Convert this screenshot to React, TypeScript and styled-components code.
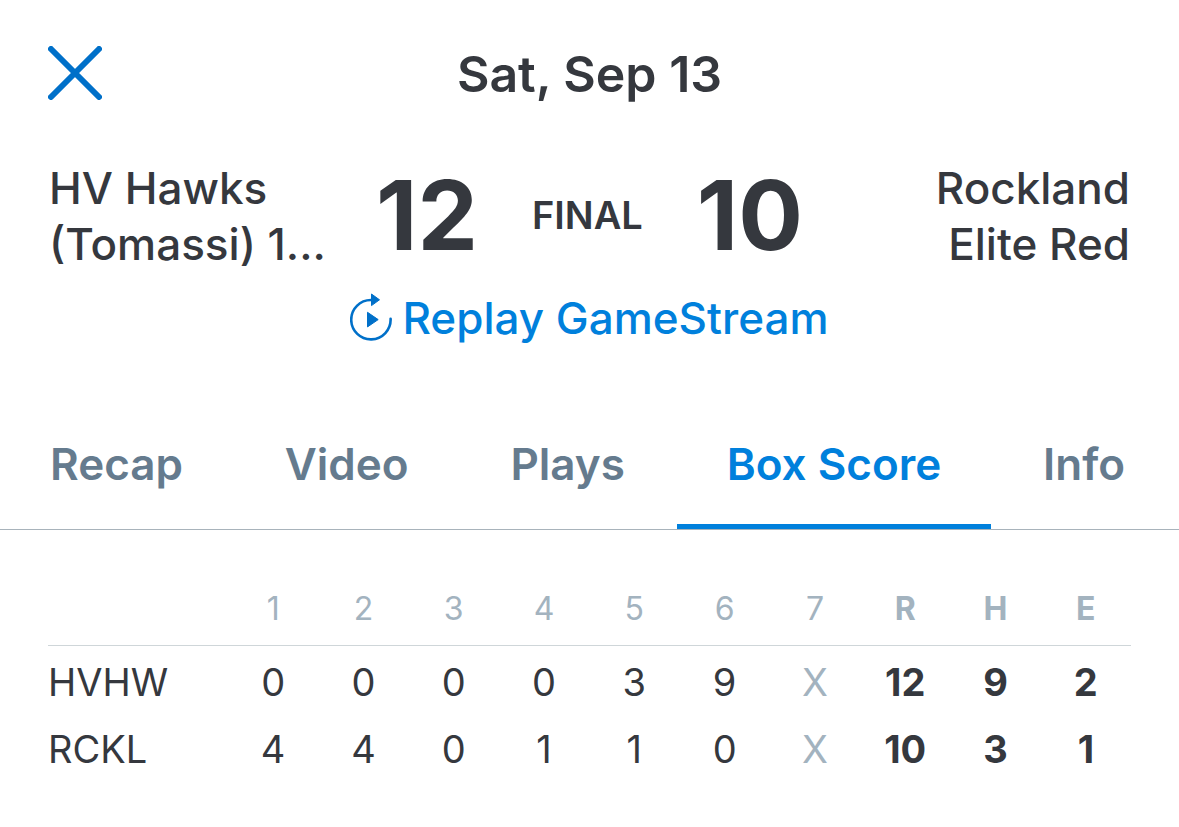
import React from "react";
import styled, { createGlobalStyle } from "styled-components";

const GlobalStyle = createGlobalStyle`
  *, *::before, *::after { box-sizing: border-box; }
  body {
    margin: 0;
    background: #fff;
    color: #35383e;
    font-family: Inter, "Liberation Sans", sans-serif;
  }
  button, h1, h2, p { margin: 0; padding: 0; font: inherit; }
  button { border: 0; background: none; cursor: pointer; }
`;

const Header = styled.header`
  display: grid;
  grid-template-columns: 56px 1fr 56px;
  align-items: center;
  padding: 40px 48px 0;
`;

const CloseButton = styled.button`
  display: flex;
  padding-bottom: 2px;
  color: #0070c9;
`;

const Title = styled.h1`
  && {
    text-align: center;
    font-size: 50px;
    line-height: 68px;
    font-weight: 600;
  }
`;

const Scoreboard = styled.section`
  display: grid;
  grid-template-columns: 1fr auto 1fr;
  align-items: center;
  padding: 52px 49px 0;
`;

const Team = styled.h2<{ $away?: boolean }>`
  && {
    font-size: 44px;
    line-height: 56px;
    font-weight: 500;
    white-space: pre-line;
    text-align: ${(p) => (p.$away ? "right" : "left")};
  }
`;

const Result = styled.div`
  display: flex;
  align-items: center;
  gap: 54px;
`;

const Score = styled.strong`
  padding-bottom: 2px;
  font-size: 96px;
  line-height: 110px;
  font-weight: 700;
`;

const Status = styled.span`
  padding-bottom: 2px;
  font-size: 38px;
  line-height: 56px;
  font-weight: 600;
`;

const ReplayButton = styled.button`
  display: flex;
  align-items: center;
  gap: 10px;
  color: #0080dc;
  && {
    margin: 16px auto 0;
    font-size: 44px;
    line-height: 60px;
    font-weight: 500;
  }
`;

const ReplaySymbol = styled.svg`
  color: #0070c9;
`;

const Tabs = styled.nav`
  display: flex;
  justify-content: space-between;
  margin-top: 64px;
  padding-right: 4px;
  border-bottom: 1px solid #a8b3bb;
`;

const Tab = styled.button<{ $active?: boolean }>`
  height: 117px;
  color: ${(p) => (p.$active ? "#0080dc" : "#657b8e")};
  border-bottom: 5px solid ${(p) => (p.$active ? "#0080dc" : "transparent")};
  && {
    padding: 0 50px 8px;
    font-size: 44px;
    line-height: 56px;
    font-weight: 600;
    white-space: nowrap;
  }
`;

const BoxScore = styled.section`
  padding: 40px 48px 44px;
`;

const Table = styled.table`
  width: 100%;
  table-layout: fixed;
  border-collapse: collapse;
  font-size: 38px;
  text-align: center;
`;

const TeamColumn = styled.col`
  width: 180px;
`;

const HeadCell = styled.th<{ $total?: boolean }>`
  height: 75px;
  padding: 2px 0 0;
  border-bottom: 1px solid #cfd6d9;
  color: #a3b3bf;
  font-size: 32px;
  font-weight: ${(p) => (p.$total ? 700 : 400)};
`;

const TeamCell = styled.th`
  padding: 6px 0 0;
  text-align: left;
  font-weight: 400;
`;

const Cell = styled.td<{ $total?: boolean; $muted?: boolean }>`
  height: 67px;
  padding: 6px 0 0;
  font-weight: ${(p) => (p.$total ? 700 : 400)};
  color: ${(p) => (p.$muted ? "#a3b3bf" : "inherit")};
`;

const columns = ["1", "2", "3", "4", "5", "6", "7", "R", "H", "E"];
const rows = [
  { team: "HVHW", values: ["0", "0", "0", "0", "3", "9", "X", "12", "9", "2"] },
  { team: "RCKL", values: ["4", "4", "0", "1", "1", "0", "X", "10", "3", "1"] },
];
const tabs = ["Recap", "Video", "Plays", "Box Score", "Info"];

function CloseIcon() {
  return (
    <svg width="54" height="54" viewBox="0 0 54 54" fill="none" stroke="currentColor" strokeWidth="6" strokeLinecap="round" aria-hidden="true">
      <path d="M3 3 51 51M51 3 3 51" />
    </svg>
  );
}

function ReplayIcon() {
  return (
    <ReplaySymbol width="42" height="50" viewBox="0 0 42 50" aria-hidden="true">
      <path d="M21 7A19.7 19.7 0 1 0 40.6 25.8" fill="none" stroke="currentColor" strokeWidth="2.6" strokeLinecap="round" />
      <path d="M21.5 1 29.5 6.8 21.5 12.6Z" fill="currentColor" stroke="currentColor" strokeWidth="1" strokeLinejoin="round" />
      <path d="M17.5 19.3 28.2 26.6 17.5 33.9Z" fill="currentColor" stroke="currentColor" strokeWidth="1" strokeLinejoin="round" />
    </ReplaySymbol>
  );
}

export default function App() {
  return (
    <>
      <GlobalStyle />
      <Header>
        <CloseButton aria-label="Close"><CloseIcon /></CloseButton>
        <Title>Sat, Sep 13</Title>
      </Header>
      <main>
        <Scoreboard>
          <Team>{"HV Hawks\n(Tomassi) 1..."}</Team>
          <Result>
            <Score>12</Score>
            <Status>FINAL</Status>
            <Score>10</Score>
          </Result>
          <Team $away>{"Rockland\nElite Red"}</Team>
        </Scoreboard>
        <ReplayButton><ReplayIcon />Replay GameStream</ReplayButton>
        <Tabs>
          {tabs.map((t) => (
            <Tab key={t} $active={t === "Box Score"}>{t}</Tab>
          ))}
        </Tabs>
        <BoxScore>
          <Table>
            <colgroup>
              <TeamColumn />
              {columns.map((c) => <col key={c} />)}
            </colgroup>
            <thead>
              <tr>
                <HeadCell aria-label="Team" />
                {columns.map((c, i) => (
                  <HeadCell key={c} scope="col" $total={i > 6}>{c}</HeadCell>
                ))}
              </tr>
            </thead>
            <tbody>
              {rows.map((r) => (
                <tr key={r.team}>
                  <TeamCell scope="row">{r.team}</TeamCell>
                  {r.values.map((v, i) => (
                    <Cell key={columns[i]} $total={i > 6} $muted={v === "X"}>{v}</Cell>
                  ))}
                </tr>
              ))}
            </tbody>
          </Table>
        </BoxScore>
      </main>
    </>
  );
}
